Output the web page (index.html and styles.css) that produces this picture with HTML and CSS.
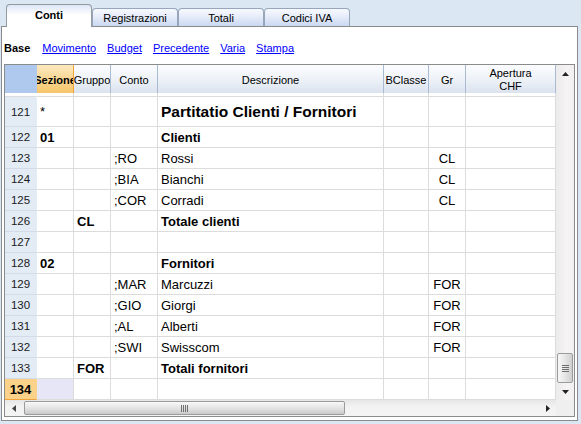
FILE: index.html
```html
<!DOCTYPE html>
<html>
<head>
<meta charset="utf-8">
<title>Conti</title>
<link rel="stylesheet" href="styles.css">
</head>
<body>
<div class="tabs">
  <div class="tab active">Conti</div>
  <div class="tab">Registrazioni</div>
  <div class="tab">Totali</div>
  <div class="tab">Codici IVA</div>
</div>
<div class="panel">
  <div class="views">
    <span class="current">Base</span>
    <a href="#">Movimento</a>
    <a href="#">Budget</a>
    <a href="#">Precedente</a>
    <a href="#">Varia</a>
    <a href="#">Stampa</a>
  </div>
  <div class="grid">
    <div class="table">
      <div class="row head">
        <div class="c h corner"></div>
        <div class="c h sel">Sezione</div>
        <div class="c h">Gruppo</div>
        <div class="c h">Conto</div>
        <div class="c h">Descrizione</div>
        <div class="c h">BClasse</div>
        <div class="c h">Gr</div>
        <div class="c h">Apertura<br>CHF</div>
      </div>
      <div class="row spacer">
        <div class="c blank"></div><div class="c"></div><div class="c"></div><div class="c"></div><div class="c"></div><div class="c"></div><div class="c"></div><div class="c"></div>
      </div>
      <div class="row tall">
        <div class="c num">121</div><div class="c">*</div><div class="c"></div><div class="c"></div><div class="c title">Partitatio Clienti / Fornitori</div><div class="c"></div><div class="c"></div><div class="c"></div>
      </div>
      <div class="row">
        <div class="c num">122</div><div class="c b">01</div><div class="c"></div><div class="c"></div><div class="c b">Clienti</div><div class="c"></div><div class="c"></div><div class="c"></div>
      </div>
      <div class="row">
        <div class="c num">123</div><div class="c"></div><div class="c"></div><div class="c">;RO</div><div class="c">Rossi</div><div class="c"></div><div class="c ctr">CL</div><div class="c"></div>
      </div>
      <div class="row">
        <div class="c num">124</div><div class="c"></div><div class="c"></div><div class="c">;BIA</div><div class="c">Bianchi</div><div class="c"></div><div class="c ctr">CL</div><div class="c"></div>
      </div>
      <div class="row">
        <div class="c num">125</div><div class="c"></div><div class="c"></div><div class="c">;COR</div><div class="c">Corradi</div><div class="c"></div><div class="c ctr">CL</div><div class="c"></div>
      </div>
      <div class="row">
        <div class="c num">126</div><div class="c"></div><div class="c b">CL</div><div class="c"></div><div class="c b">Totale clienti</div><div class="c"></div><div class="c"></div><div class="c"></div>
      </div>
      <div class="row">
        <div class="c num">127</div><div class="c"></div><div class="c"></div><div class="c"></div><div class="c"></div><div class="c"></div><div class="c"></div><div class="c"></div>
      </div>
      <div class="row">
        <div class="c num">128</div><div class="c b">02</div><div class="c"></div><div class="c"></div><div class="c b">Fornitori</div><div class="c"></div><div class="c"></div><div class="c"></div>
      </div>
      <div class="row">
        <div class="c num">129</div><div class="c"></div><div class="c"></div><div class="c">;MAR</div><div class="c">Marcuzzi</div><div class="c"></div><div class="c ctr">FOR</div><div class="c"></div>
      </div>
      <div class="row">
        <div class="c num">130</div><div class="c"></div><div class="c"></div><div class="c">;GIO</div><div class="c">Giorgi</div><div class="c"></div><div class="c ctr">FOR</div><div class="c"></div>
      </div>
      <div class="row">
        <div class="c num">131</div><div class="c"></div><div class="c"></div><div class="c">;AL</div><div class="c">Alberti</div><div class="c"></div><div class="c ctr">FOR</div><div class="c"></div>
      </div>
      <div class="row">
        <div class="c num">132</div><div class="c"></div><div class="c"></div><div class="c">;SWI</div><div class="c">Swisscom</div><div class="c"></div><div class="c ctr">FOR</div><div class="c"></div>
      </div>
      <div class="row">
        <div class="c num">133</div><div class="c"></div><div class="c b">FOR</div><div class="c"></div><div class="c b">Totali fornitori</div><div class="c"></div><div class="c"></div><div class="c"></div>
      </div>
      <div class="row">
        <div class="c num cur">134</div><div class="c focus"></div><div class="c"></div><div class="c"></div><div class="c"></div><div class="c"></div><div class="c"></div><div class="c"></div>
      </div>
    </div>
    <div class="vscroll">
      <div class="sbtn"><svg width="7" height="4" viewBox="0 0 7 4"><path d="M3.5 0 L7 4 L0 4 Z" fill="#222"/></svg></div>
      <div class="track"></div>
      <div class="vthumb"><svg width="7" height="7" viewBox="0 0 7 7"><path d="M0 0.5H7M0 2.5H7M0 4.5H7M0 6.5H7" stroke="#6e6e6e" stroke-width="1"/></svg></div>
      <div class="sbtn"><svg width="7" height="4" viewBox="0 0 7 4"><path d="M0 0 L7 0 L3.5 4 Z" fill="#222"/></svg></div>
    </div>
    <div class="hscroll">
      <div class="hbtn"><svg width="4" height="7" viewBox="0 0 4 7"><path d="M0 3.5 L4 0 L4 7 Z" fill="#444"/></svg></div>
      <div class="hthumb"><svg width="7" height="7" viewBox="0 0 7 7"><path d="M0.5 0V7M2.5 0V7M4.5 0V7M6.5 0V7" stroke="#6e6e6e" stroke-width="1"/></svg></div>
      <div class="track"></div>
      <div class="hbtn"><svg width="4" height="7" viewBox="0 0 4 7"><path d="M4 3.5 L0 0 L0 7 Z" fill="#222"/></svg></div>
    </div>
    <div class="sc-corner"></div>
  </div>
</div>
</body>
</html>
```

FILE: styles.css
```css
* { box-sizing: border-box; }
html, body { margin: 0; padding: 0; }
body {
  background: #dce7f4;
  width: 581px;
  height: 424px;
  overflow: hidden;
  font-family: "Liberation Sans", Arial, sans-serif;
  font-size: 11px;
  color: #000;
}

/* tabs */
.tabs {
  display: flex;
  align-items: flex-end;
  height: 26px;
  padding-left: 6px;
}
.tab {
  width: 86px;
  height: 18px;
  border: 1px solid #98a6bc;
  border-bottom: none;
  border-radius: 4px 4px 0 0;
  background: linear-gradient(#f7f9fe, #e6ecf9 45%, #cad8f1);
  text-align: center;
  padding-top: 1px;
  line-height: 16px;
}
.tab.active {
  position: relative;
  z-index: 1;
  height: 23px;
  margin-bottom: -1px;
  padding-top: 0;
  line-height: 21px;
  border-color: #929b9e;
  background: linear-gradient(#dde5f6, #ffffff 10px);
  font-weight: bold;
}

/* panel */
.panel {
  margin-left: 1px;
  width: 577px;
  height: 395px;
  border: 1px solid #8b8b8b;
  background: #fff;
}
.views {
  display: flex;
  height: 37px;
  padding: 15px 0 0 2px;
  line-height: 13px;
}
.views .current { font-weight: bold; margin-right: 12px; }
.views a { color: #0000ff; text-decoration: underline; margin-right: 11px; }

/* grid */
.grid {
  margin-left: 2px;
  width: 571px;
  height: 353px;
  border: 1px solid #8b8b8b;
  display: grid;
  grid-template-columns: 551px 18px;
  grid-template-rows: 335px 16px;
}
.table { overflow: hidden; background: #fff; }
.row {
  display: grid;
  grid-template-columns: 32px 37px 37px 47px 226px 45px 37px 90px;
  height: 21px;
}
.row.head { height: 28px; }
.row.spacer { height: 4px; }
.row.tall { height: 30px; }

.c {
  display: flex;
  align-items: center;
  padding: 0 3px;
  white-space: nowrap;
  overflow: hidden;
  border-right: 1px solid #dcdcdc;
  border-bottom: 1px solid #dcdcdc;
  font-size: 13px;
}
.c.b { font-weight: bold; }
.c.title { font-weight: bold; font-size: 15.5px; }
.c.ctr { justify-content: center; }
.c.blank { border-right-color: #fff; border-bottom-color: #dcdcdc; }

.c.num {
  justify-content: center;
  background: #e3ebf5;
  border-right-color: #e3ebf5;
  border-bottom-color: #d2dbe7;
  font-size: 11.5px;
  color: #1a1a1a;
  padding: 0;
}
.c.num.cur {
  background: #fbd28a;
  border-right-color: #fbd28a;
  border-bottom-color: #f0a33a;
  font-weight: bold;
  font-size: 13px;
  color: #000;
}
.c.focus { background: #e6e6f6; }

.c.h {
  justify-content: center;
  text-align: center;
  padding: 2px 0 0;
  font-size: 11px;
  line-height: 13px;
  border-bottom: none;
  border-right: 1px solid #a8bbd3;
  background: linear-gradient(#fbfcfe, #eef2f8 50%, #dbe3ef);
}
.c.h.corner { background: #aec8ee; border-right-color: #aec8ee; }
.c.h.sel {
  font-weight: bold;
  border-right-color: #f0a23b;
  background: linear-gradient(#fde9c0, #f9d794 50%, #f6c66a);
}

/* scrollbars */
.vscroll {
  display: flex;
  flex-direction: column;
  background: linear-gradient(90deg, #ecebec, #f5f3f4 60%, #f2f0f1);
}
.sbtn {
  height: 17px;
  display: flex;
  align-items: center;
  justify-content: center;
}
.track { flex: 1; }
.vthumb {
  height: 30px;
  margin: 0 1px;
  border: 1px solid #9b9b9b;
  border-radius: 2px;
  background: linear-gradient(90deg, #f7f7f7, #e4e4e4 55%, #cfcfcf);
  display: flex;
  align-items: center;
  justify-content: center;
}
.hscroll {
  display: flex;
  background: linear-gradient(#e6e6e6, #f2f2f2 40%, #f4f4f4);
}
.hbtn {
  width: 17px;
  display: flex;
  align-items: center;
  justify-content: center;
}
.hthumb {
  width: 321px;
  margin: 1px 0 1px 2px;
  border: 1px solid #9b9b9b;
  border-radius: 2px;
  background: linear-gradient(#f8f8f8, #e4e4e4 50%, #cacaca);
  display: flex;
  align-items: center;
  justify-content: center;
}
.sc-corner { background: #f0eff0; }
```
